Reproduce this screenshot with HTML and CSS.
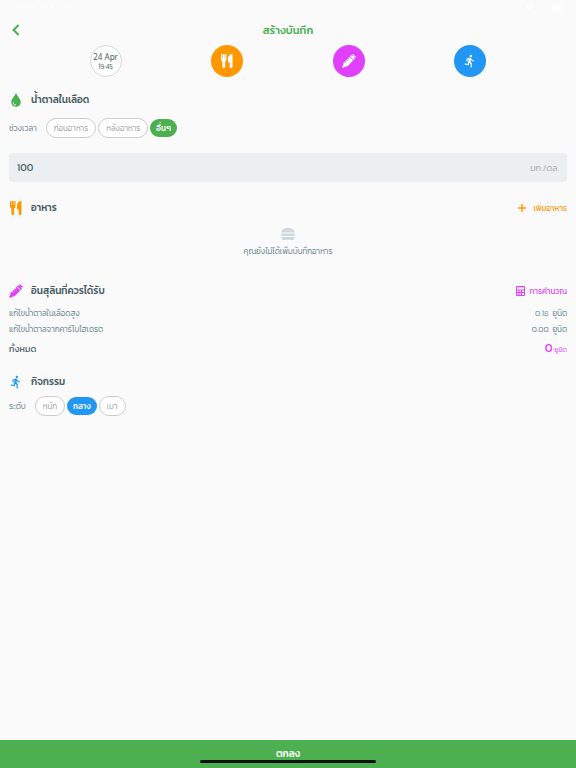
FILE: index.html
```html
<!DOCTYPE html>
<html lang="th">
<head>
<meta charset="utf-8">
<meta name="viewport" content="width=device-width, initial-scale=1">
<title>สร้างบันทึก</title>
<link rel="stylesheet" href="styles.css">
</head>
<body>
<svg class="defs" aria-hidden="true">
  <symbol id="utensils" viewBox="0 0 24 28">
    <path d="M0 0h2.500v8h1.200V0h3.600v8h1.200V0H11v10c0 2.500-1.200 4-2.700 4.600V26a2 2 0 0 1-2 2h-1.600a2 2 0 0 1-2-2V14.600C1.200 14 0 12.500 0 10z"/>
    <path d="M23 0v26a2 2 0 0 1-2 2h-1.500a2 2 0 0 1-2-2v-9H14V9c0-5 4-9 9-9z"/>
  </symbol>
  <symbol id="syringe" viewBox="0 0 28 28">
    <path d="M16 4.500l2.500-2.500 2.200 2.200 1.300-1.300L20.500 1.400 22 0l6 6-1.500 1.500-1.400-1.500-1.300 1.300 2.200 2.200-2.500 2.500z"/>
    <path d="M15 5.500l7.500 7.500L12 23.500c-2 2-4.500 2.300-6.500 1.800L2.500 28 0 25.500l2.700-3c-.5-2-.2-4.500 1.800-6.500l.8-.8 2.400 2.400 1-1-2.400-2.400 2.200-2.200 2.400 2.400 1-1-2.400-2.400 2.200-2.200 2.400 2.400 1-1-2.400-2.400z"/>
  </symbol>
  <symbol id="runner" viewBox="0 0 24 24">
    <path d="M13.490 5.480c1.100 0 2-.9 2-2s-.9-2-2-2-2 .9-2 2 .9 2 2 2zm-3.600 13.900l1-4.400 2.100 2v6h2v-7.500l-2.100-2 .6-3c1.300 1.500 3.300 2.500 5.500 2.500v-2c-1.900 0-3.500-1-4.300-2.400l-1-1.600c-.4-.6-1-1-1.700-1-.3 0-.5.1-.8.1l-5.200 2.200v4.700h2v-3.400l1.800-.7-1.600 8.100-4.900-1-.4 2 7 1.400z"/>
  </symbol>
</svg>

<div class="screen">
  <div class="status">
    <span>2:45 PM&nbsp; Fri Apr 24</span>
    <span class="status-right">
      <svg viewBox="0 0 14 10" width="9" height="7" aria-hidden="true"><path d="M0 3a10 10 0 0 1 14 0l-7 7z"/></svg>
      82%
      <svg viewBox="0 0 14 7" width="14" height="7" aria-hidden="true"><rect width="11" height="6" y="1" rx="1"/><rect x="12" y="3" width="1" height="2"/></svg>
    </span>
  </div>

  <header class="topbar">
    <button class="back" type="button" aria-label="กลับ">
      <svg viewBox="0 0 8 12" width="8" height="12" aria-hidden="true"><path d="M6.600 1 1.600 6l5 5"/></svg>
    </button>
    <h1>สร้างบันทึก</h1>
  </header>

  <nav class="shortcuts">
    <button class="circle date" type="button"><span>24 Apr</span><small>19:45</small></button>
    <button class="circle food" type="button" aria-label="อาหาร"><svg width="12" height="14"><use href="#utensils"/></svg></button>
    <button class="circle insulin" type="button" aria-label="อินสุลิน"><svg width="14" height="14"><use href="#syringe"/></svg></button>
    <button class="circle activity" type="button" aria-label="กิจกรรม"><svg width="14" height="14"><use href="#runner"/></svg></button>
  </nav>

  <main>
    <section class="glucose">
      <div class="heading">
        <span class="icon green"><svg viewBox="0 0 20 28" width="10" height="14" aria-hidden="true"><path d="M10 0c2 6 9.500 11.500 9.500 18.500a9.500 9.500 0 0 1-19 0C.5 11.500 8 6 10 0z"/><path class="shine" d="M4.500 18.500c0 3.500 2 5.500 5.500 5.800" /></svg></span>
        <h2>น้ำตาลในเลือด</h2>
      </div>
      <div class="choices">
        <span class="label">ช่วงเวลา</span>
        <button class="chip" type="button">ก่อนอาหาร</button>
        <button class="chip" type="button">หลังอาหาร</button>
        <button class="chip on-green" type="button" aria-pressed="true">อื่นๆ</button>
      </div>
      <label class="field">
        <input type="text" inputmode="numeric" value="100" aria-label="น้ำตาลในเลือด">
        <span>มก./ดล.</span>
      </label>
    </section>

    <section class="meals">
      <div class="heading">
        <span class="icon orange"><svg width="12" height="14"><use href="#utensils"/></svg></span>
        <h2>อาหาร</h2>
        <button class="action orange" type="button">
          <svg viewBox="0 0 8 8" width="8" height="8" aria-hidden="true"><path d="M3.300 0h1.400v3.300H8v1.400H4.700V8H3.300V4.700H0V3.300h3.300z"/></svg>
          เพิ่มอาหาร
        </button>
      </div>
      <div class="empty">
        <svg viewBox="0 0 28 24" width="14" height="12" aria-hidden="true"><path d="M1 9C1 3 7 0 14 0s13 3 13 9zM2 11h24a2 2 0 0 1 0 5H2a2 2 0 0 1 0-5zM1 18h26v2a4 4 0 0 1-4 4H5a4 4 0 0 1-4-4z"/></svg>
        <p>คุณยังไม่ได้เพิ่มบันทึกอาหาร</p>
      </div>
    </section>

    <section class="dose">
      <div class="heading">
        <span class="icon pink"><svg width="14" height="14"><use href="#syringe"/></svg></span>
        <h2>อินสุลินที่ควรได้รับ</h2>
        <button class="action calc pink" type="button">
          <svg viewBox="0 0 18 20" width="9" height="10" aria-hidden="true"><path fill-rule="evenodd" d="M2 0h14a2 2 0 0 1 2 2v16a2 2 0 0 1-2 2H2a2 2 0 0 1-2-2V2a2 2 0 0 1 2-2zm0 2.500v4.500h14V2.500zM2 9v3h3V9zm5 0v3h3V9zm5 0v3h4V9zM2 14v4h3v-4zm5 0v4h3v-4zm5 0v4h4v-4z"/></svg>
          การคำนวณ
        </button>
      </div>
      <dl>
        <div class="row"><dt>แก้ไขน้ำตาลในเลือดสูง</dt><dd>0.18&nbsp; ยูนิต</dd></div>
        <div class="row"><dt>แก้ไขน้ำตาลจากคาร์โบไฮเดรต</dt><dd>0.00&nbsp; ยูนิต</dd></div>
        <div class="row total"><dt>ทั้งหมด</dt><dd><b>0</b> ยูนิต</dd></div>
      </dl>
    </section>

    <section class="exercise">
      <div class="heading">
        <span class="icon blue"><svg width="14" height="14"><use href="#runner"/></svg></span>
        <h2>กิจกรรม</h2>
      </div>
      <div class="choices">
        <span class="label">ระดับ</span>
        <button class="chip" type="button">หนัก</button>
        <button class="chip on-blue" type="button" aria-pressed="true">กลาง</button>
        <button class="chip" type="button">เบา</button>
      </div>
    </section>
  </main>

  <button class="submit" type="button">ตกลง</button>
  <div class="home-bar"></div>
</div>
</body>
</html>
```
FILE: styles.css
```css
* { box-sizing: border-box; }
body {
  margin: 0;
  background: #fafafa;
  color: #455a64;
  font-family: Kanit, Prompt, "Noto Sans Thai", "Noto Sans", sans-serif;
  font-size: 8px;
  font-weight: 300;
  line-height: 12px;
}
h1, h2, p, dl, dd { margin: 0; }
button { font: inherit; color: inherit; border: 0; padding: 0; background: none; white-space: nowrap; }
svg { display: block; fill: currentColor; flex: none; }
.defs { position: absolute; width: 0; height: 0; }
.screen { position: relative; min-height: 100vh; display: flex; flex-direction: column; }

.status { display: flex; justify-content: space-between; height: 14px; padding: 1px 10px 0; color: #fff; font-family: "Liberation Sans", sans-serif; font-size: 7px; font-weight: 400; }
.status-right { display: flex; align-items: center; gap: 2px; }

.topbar { display: grid; grid-template-columns: 1fr auto 1fr; align-items: center; height: 31px; padding: 0 12px; color: #4caf50; }
.back { justify-self: start; }
.back path { fill: none; stroke: currentColor; stroke-width: 2; }
h1 { font-size: 11px; line-height: 18px; font-weight: 500; }

.shortcuts { display: flex; justify-content: space-evenly; }
.circle { width: 32px; height: 32px; border-radius: 50%; display: flex; flex-direction: column; align-items: center; justify-content: center; color: #fff; }
.date { background: #fff; border: 1px solid #d8d8d8; color: #455a64; line-height: 11px; font-family: "Noto Sans", sans-serif; font-weight: 400; }
.date small { font-family: Kanit, Prompt, sans-serif; font-size: 7px; line-height: 10px; font-weight: 300; }
.food { background: #ff9800; }
.insulin { background: #e040fb; }
.activity { background: #2196f3; }

main { flex: 1; padding: 0 9px; }
.heading { display: flex; align-items: center; height: 18px; }
.icon { width: 14px; margin-right: 8px; display: flex; justify-content: center; }
h2 { font-size: 10px; line-height: 18px; font-weight: 500; }
.green { color: #4caf50; }
.orange { color: #ff9800; }
.pink { color: #e040fb; }
.blue { color: #2196f3; }
.shine { fill: none; stroke: #fff; stroke-width: 2; }
.action { margin-left: auto; display: flex; align-items: center; gap: 7px; font-weight: 400; }
.calc { gap: 5px; }

.glucose { margin-top: 14px; }
.choices { display: flex; align-items: center; gap: 2px; margin-top: 9px; color: #607d8b; }
.label { margin-right: 7px; }
.chip { height: 20px; padding: 0 7px; border: 1px solid #ccc; border-radius: 10px; background: #fff; color: #a0a0a0; }
.on-green, .on-blue { height: 18px; padding: 0 6px; border: 0; color: #fff; font-weight: 500; }
.on-green { background: #4caf50; }
.on-blue { background: #2196f3; }
.field { display: flex; align-items: center; height: 29px; margin-top: 15px; padding: 0 8px; border-radius: 3px; background: #eceff1; color: #a0a8ac; font-size: 9px; }
.field input { flex: 1; min-width: 0; padding: 0; border: 0; outline: 0; background: none; color: #455a64; font: inherit; font-size: 10px; font-weight: 400; }

.meals { margin-top: 17px; }
.empty { display: flex; flex-direction: column; align-items: center; gap: 5px; margin-top: 11px; color: #607d8b; }
.empty svg { color: #cfd8dc; }

.dose { margin-top: 25px; }
dl { margin-top: 5px; color: #607d8b; }
.row { display: flex; justify-content: space-between; align-items: center; height: 16px; }
.total { height: 24px; }
.total dt { color: #455a64; font-size: 9px; font-weight: 400; }
.total dd { color: #e040fb; font-size: 7px; }
.total b { font-size: 12px; font-weight: 400; }
.exercise { margin-top: 12px; }
.exercise .choices { margin-top: 5px; }

.submit { height: 28px; background: #4caf50; color: #fff; font-size: 10px; font-weight: 500; }
.home-bar { position: absolute; left: 50%; bottom: 5px; width: 176px; height: 3px; margin-left: -88px; border-radius: 2px; background: #111; }
```
